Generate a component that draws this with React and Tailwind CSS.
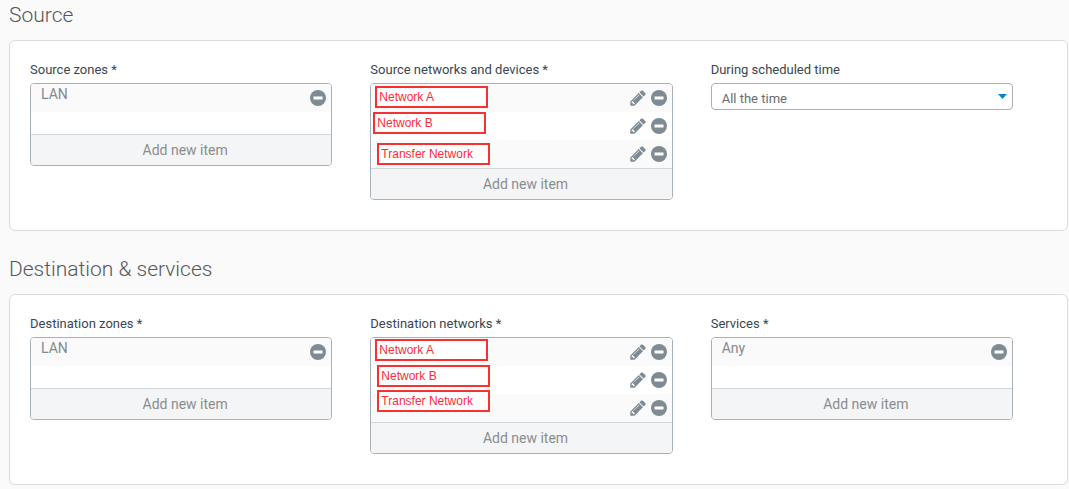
import { useId } from "react";

function Pencil() {
  return (
    <svg viewBox="-30 -10 1580 1580" className="size-4" aria-hidden="true">
      <path
        fill="#7f8b93"
        d="M363 1408l91-91-235-235-91 91v107h128v128h107zm523-928q0-22-22-22-10 0-17 7l-542 542q-7 7-7 17 0 22 22 22 10 0 17-7l542-542q7-7 7-17zm-54-192l416 416-832 832h-416v-416zm683 96q0 53-37 90l-166 166-416-416 166-165q36-38 90-38 53 0 91 38l235 234q37 39 37 91z"
      />
    </svg>
  );
}

function MinusCircle() {
  return (
    <svg viewBox="0 0 16 16" className="size-4" aria-hidden="true">
      <circle cx="8" cy="8" r="8" fill="#7f8b93" />
      <rect x="3.5" y="6.5" width="9" height="3" fill="#fff" />
    </svg>
  );
}

function Row({ name, masked, editable }) {
  return (
    <li className="flex h-7 items-start justify-between pr-[5px] pl-[10px] odd:bg-[#fafafa]">
      <span className="text-sm leading-5 text-[#84898e]">{masked ? "" : name}</span>
      <span className="flex h-7 items-center gap-[5px]">
        {editable && (
          <button type="button" aria-label={`Edit ${name}`}>
            <Pencil />
          </button>
        )}
        <button type="button" aria-label={`Remove ${name}`}>
          <MinusCircle />
        </button>
      </span>
    </li>
  );
}

function ItemList({ label, items, marks = [] }) {
  const id = useId();
  const masked = marks.length > 0;
  return (
    <div className="pr-[38px]">
      <h3 id={id} className="mb-[3px] text-[13px] leading-5 text-[#3a4650]">
        {label}
      </h3>
      <div
        role="group"
        aria-labelledby={id}
        className="relative overflow-hidden rounded border border-[#a9b1b8] bg-white"
      >
        <ul className="min-h-[50px]">
          {items.map((name) => (
            <Row key={name} name={name} masked={masked} editable={masked} />
          ))}
        </ul>
        <button
          type="button"
          className="block w-full border-t border-[#d3d6d9] bg-[#f4f5f7] pl-2 text-sm leading-[30px] text-[#8a8d90]"
        >
          Add new item
        </button>
        {marks.map((place, i) => (
          <span
            key={items[i]}
            className={`absolute h-[22px] w-[113px] border-2 border-[#f73030] bg-white pl-0.5 font-['Liberation_Sans',sans-serif] text-xs leading-[18px] whitespace-nowrap text-[#fa2c37] ${place}`}
          >
            {items[i]}
          </span>
        ))}
      </div>
    </div>
  );
}

function TimeSelect() {
  const id = useId();
  return (
    <div className="pr-[38px]">
      <label htmlFor={id} className="mb-[3px] block text-[13px] leading-5 text-[#3a4650]">
        During scheduled time
      </label>
      <div className="relative">
        <select
          id={id}
          className="block h-[27px] w-full appearance-none rounded border border-[#a9b1b8] bg-white pt-1 pr-6 pl-[10px] text-[13px] leading-5 text-[#686c70]"
        >
          <option>All the time</option>
        </select>
        <svg
          viewBox="0 0 9 5"
          className="pointer-events-none absolute top-[11px] right-[6px] h-[5px] w-[9px]"
          aria-hidden="true"
        >
          <path d="M0 0h9L4.5 5z" fill="#0a84cc" />
        </svg>
      </div>
    </div>
  );
}

function Section({ title, children }) {
  return (
    <section>
      <h2 className="mb-[11px] text-[21px] leading-7 font-light text-[#55585b]">{title}</h2>
      <div className="grid grid-cols-3 items-start rounded-md border border-[#dcdcdc] bg-white pt-[19px] pr-4 pb-[30px] pl-5">
        {children}
      </div>
    </section>
  );
}

const networks = ["Network A", "Network B", "Transfer Network"];

export default function App() {
  return (
    <main className="flex min-h-screen flex-col gap-6 bg-[#fafafa] pt-px pr-px pl-[9px] font-[Roboto,sans-serif]">
      <Section title="Source">
        <ItemList label="Source zones *" items={["LAN"]} />
        <ItemList
          label="Source networks and devices *"
          items={networks}
          marks={["top-0.5 left-1", "top-7 left-0.5", "top-[59px] left-1.5"]}
        />
        <TimeSelect />
      </Section>
      <Section title="Destination & services">
        <ItemList label="Destination zones *" items={["LAN"]} />
        <ItemList
          label="Destination networks *"
          items={networks}
          marks={["top-px left-1", "top-[27px] left-1.5", "top-[52px] left-1.5"]}
        />
        <ItemList label="Services *" items={["Any"]} />
      </Section>
    </main>
  );
}
